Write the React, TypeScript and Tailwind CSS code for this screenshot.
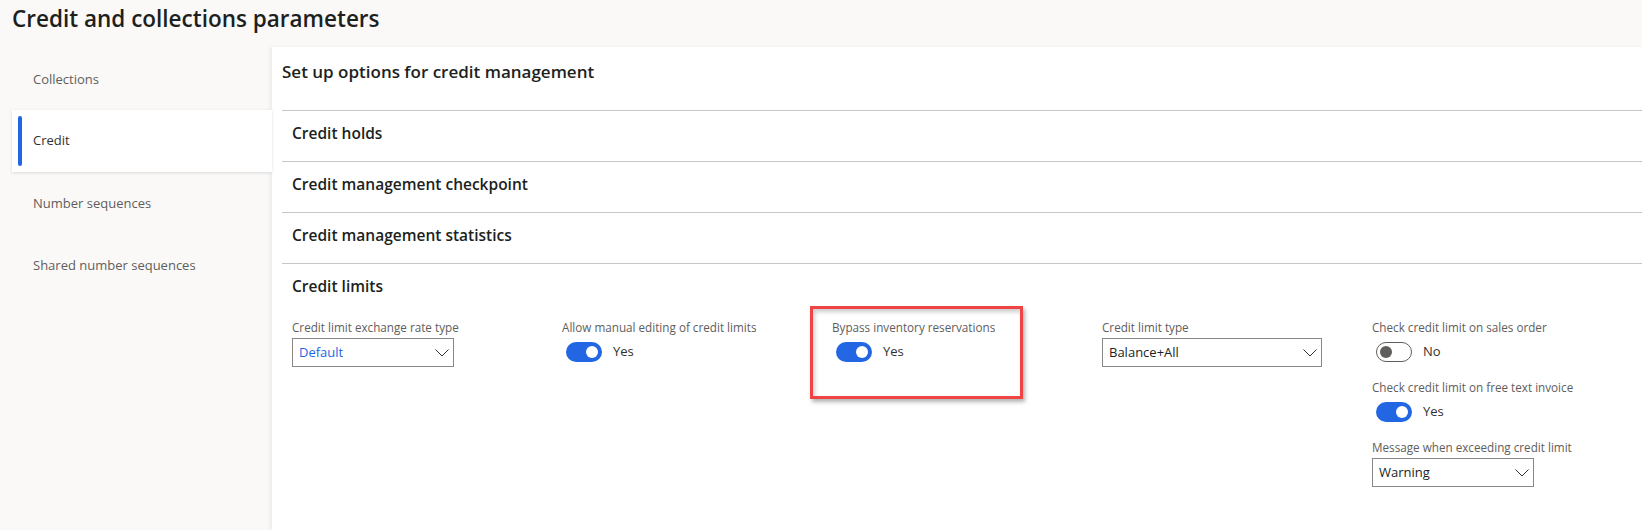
import { ReactNode } from 'react'

const navItems = ['Collections', 'Credit', 'Number sequences', 'Shared number sequences']
const sections = ['Credit holds', 'Credit management checkpoint', 'Credit management statistics']

function Chevron() {
  return (
    <svg width="14" height="8" viewBox="0 0 14 8" fill="none" stroke="#323130" strokeWidth={1}>
      <polyline points="0.5,0.5 7,7 13.5,0.5" />
    </svg>
  )
}

function Field({ label, children }: { label: string; children: ReactNode }) {
  return (
    <div className="mb-[13px]">
      <div className="h-[17px] mb-[2px] text-[11.7px] leading-[17px] text-[#605e5c] whitespace-nowrap">{label}</div>
      {children}
    </div>
  )
}

function Select({ value, width, blue }: { value: string; width: string; blue?: boolean }) {
  return (
    <div className={`${width} h-[29px] border border-[#8a8886] bg-white flex items-center justify-between pl-[6px] pr-[4px]`}>
      <span className={`text-[13px] ${blue ? 'text-[#2266e3]' : 'text-[#201f1e]'}`}>{value}</span>
      <Chevron />
    </div>
  )
}

function Toggle({ on }: { on: boolean }) {
  return (
    <div className="h-[28px] flex items-center gap-[11px] pl-[4px]">
      {on ? (
        <div className="w-9 h-5 rounded-full bg-[#2266e3] flex items-center justify-end pr-[4px]">
          <div className="w-3 h-3 rounded-full bg-white" />
        </div>
      ) : (
        <div className="w-9 h-5 rounded-full border border-[#605e5c] bg-white flex items-center pl-[3px]">
          <div className="w-3 h-3 rounded-full bg-[#605e5c]" />
        </div>
      )}
      <span className="text-[13px] text-[#323130]">{on ? 'Yes' : 'No'}</span>
    </div>
  )
}

export default function App() {
  return (
    <div className="min-h-screen flex flex-col bg-[#faf9f8] text-[#323130] font-['Open_Sans','Noto_Sans',sans-serif]">
      {/* Page title */}
      <header className="h-[47px] pl-3">
        <h1 className="text-[22.5px] leading-[37px] font-semibold text-[#201f1e]">Credit and collections parameters</h1>
      </header>

      <div className="flex flex-1">
        {/* Left nav */}
        <nav className="relative z-10 w-[272px] pl-3 pt-[1px] flex flex-col">
          {navItems.map(item =>
            item === 'Credit' ? (
              <div key={item} className="h-[62px] bg-white flex items-center shadow-[0_1px_3px_rgba(0,0,0,0.13)]">
                <div className="w-[4px] h-[50px] ml-[6px] rounded-full bg-[#2266e3]" />
                <span className="ml-[11px] text-[13px] text-[#323130]">{item}</span>
              </div>
            ) : (
              <div key={item} className="h-[62px] flex items-center pl-[21px] pt-[1px] text-[13px] text-[#605e5c]">
                {item}
              </div>
            )
          )}
        </nav>

        {/* Main panel */}
        <main className="flex-1 bg-white pl-[10px] shadow-[-2px_0_4px_rgba(0,0,0,0.06)]">
          <div className="h-[63px] pt-[11px]">
            <h2 className="text-[17px] leading-[28px] font-semibold text-[#201f1e]">Set up options for credit management</h2>
          </div>

          {sections.map(s => (
            <div key={s} className="border-t border-[#c8c6c4] h-[51px] pl-[10px] pb-1 flex items-center">
              <h3 className="text-[15.5px] font-semibold text-[#201f1e]">{s}</h3>
            </div>
          ))}

          <div className="border-t border-[#c8c6c4] pl-[10px]">
            <div className="h-[50px] pb-1 flex items-center">
              <h3 className="text-[15.5px] font-semibold text-[#201f1e]">Credit limits</h3>
            </div>

            <div className="flex pt-[5px]">
              <div className="w-[270px]">
                <Field label="Credit limit exchange rate type">
                  <Select value="Default" width="w-[162px]" blue />
                </Field>
              </div>
              <div className="w-[270px]">
                <Field label="Allow manual editing of credit limits">
                  <Toggle on />
                </Field>
              </div>
              <div className="w-[270px] relative">
                {/* highlight annotation */}
                <div className="absolute -left-[22px] -top-[13px] w-[213px] h-[93px] border-[3px] border-[#f04444] shadow-[2px_3px_4px_rgba(0,0,0,0.3),inset_2px_3px_4px_rgba(0,0,0,0.2)]" />
                <Field label="Bypass inventory reservations">
                  <Toggle on />
                </Field>
              </div>
              <div className="w-[270px]">
                <Field label="Credit limit type">
                  <Select value="Balance+All" width="w-[220px]" />
                </Field>
              </div>
              <div className="w-[270px]">
                <Field label="Check credit limit on sales order">
                  <Toggle on={false} />
                </Field>
                <Field label="Check credit limit on free text invoice">
                  <Toggle on />
                </Field>
                <Field label="Message when exceeding credit limit">
                  <Select value="Warning" width="w-[162px]" />
                </Field>
              </div>
            </div>
          </div>
        </main>
      </div>
    </div>
  )
}
